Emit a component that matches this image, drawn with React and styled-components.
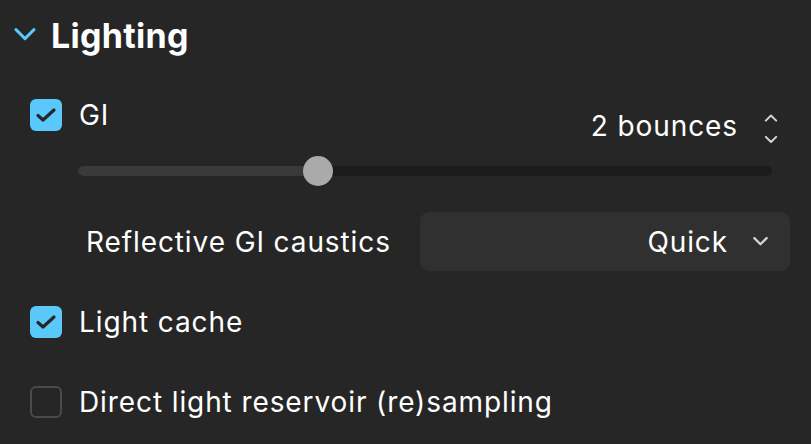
import { createGlobalStyle } from "styled-components";
import styled from "styled-components";

const GlobalStyle = createGlobalStyle`
  html, body {
    margin: 0;
    padding: 0;
    background: #262626;
  }
  body {
    font-family: Inter, "Noto Sans", sans-serif;
    color: #ffffff;
    -webkit-font-smoothing: antialiased;
  }
`;

const Chevron = ({ size = 22, color = "#5ac8fa", stroke = 3, up = false }) => (
  <svg
    width={size}
    height={size * 0.6}
    viewBox="0 0 22 13"
    fill="none"
    style={{ display: "block" }}
  >
    <path
      d={up ? "M2 11.5L11 2.5L20 11.5" : "M2 1.5L11 10.5L20 1.5"}
      stroke={color}
      strokeWidth={stroke}
      strokeLinecap="round"
      strokeLinejoin="round"
    />
  </svg>
);

const Checkbox = ({ checked }) => (
  <Box $checked={checked}>
    {checked && (
      <svg width="22" height="16" viewBox="0 0 22 16" fill="none">
        <path
          d="M3 8.5L8 13L19 3"
          stroke="#262626"
          strokeWidth="3.2"
          strokeLinecap="round"
          strokeLinejoin="round"
        />
      </svg>
    )}
  </Box>
);

const App = () => {
  const bounces = 2;
  const fill = 34.6; // percent of the track

  return (
    <>
      <GlobalStyle />
      <Panel>
        <Header>
          <Chevron />
          <Title>Lighting</Title>
        </Header>

        <GIBlock>
          <Checkbox checked />
          <GIContent>
            <TopRow>
              <Label>GI</Label>
              <ValueGroup>
                <Value>{bounces} bounces</Value>
                <Stepper>
                  <Chevron size={14} color="#d4d4d4" stroke={3.4} up />
                  <Chevron size={14} color="#d4d4d4" stroke={3.4} />
                </Stepper>
              </ValueGroup>
            </TopRow>
            <Slider>
              <Track />
              <TrackFill style={{ width: `${fill}%` }} />
              <Thumb style={{ left: `${fill}%` }} />
            </Slider>
          </GIContent>
        </GIBlock>

        <SelectRow>
          <Label>Reflective GI caustics</Label>
          <Select>
            <span>Quick</span>
            <Chevron size={15} color="#d4d4d4" stroke={3.4} />
          </Select>
        </SelectRow>

        <CheckRow $top={35}>
          <Checkbox checked />
          <Label>Light cache</Label>
        </CheckRow>

        <CheckRow $top={48}>
          <Checkbox />
          <Label>Direct light reservoir (re)sampling</Label>
        </CheckRow>
      </Panel>
    </>
  );
};

export default App;

const Panel = styled.div`
  width: 811px;
  height: 444px;
  box-sizing: border-box;
  padding: 18px 0 0 0;
  display: flex;
  flex-direction: column;
  overflow: hidden;
`;

const Header = styled.div`
  display: flex;
  align-items: center;
  gap: 15px;
  padding-left: 14px;
  height: 34px;
`;

const Title = styled.h2`
  margin: 0;
  font-size: 34px;
  font-weight: 700;
  line-height: 34px;
  letter-spacing: 0.3px;
  padding-top: 2px;
`;

const Box = styled.div`
  width: 32px;
  height: 32px;
  flex: none;
  box-sizing: border-box;
  border-radius: 6px;
  display: flex;
  align-items: center;
  justify-content: center;
  background: ${(p) => (p.$checked ? "#5ac8fa" : "transparent")};
  border: ${(p) => (p.$checked ? "none" : "2px solid #4a4a4a")};
`;

const Label = styled.span`
  font-size: 28px;
  line-height: 32px;
  letter-spacing: 0.9px;
  white-space: nowrap;
`;

const GIBlock = styled.div`
  display: flex;
  align-items: flex-start;
  gap: 17px;
  padding-left: 30px;
  margin-top: 47px;
`;

const GIContent = styled.div`
  flex: 1;
  display: flex;
  flex-direction: column;
  margin-right: 33px;
`;

const TopRow = styled.div`
  display: flex;
  justify-content: space-between;
  align-items: flex-start;
`;

const ValueGroup = styled.div`
  display: flex;
  align-items: center;
  gap: 26px;
  margin-top: 8px;
  height: 36px;
`;

const Value = styled.span`
  font-size: 28px;
  letter-spacing: 0.9px;
  line-height: 36px;
  padding-top: 2px;
`;

const Stepper = styled.div`
  display: flex;
  flex-direction: column;
  justify-content: space-between;
  height: 36px;
  padding: 7px 0 0;
  box-sizing: border-box;
  gap: 14px;
`;

const Slider = styled.div`
  position: relative;
  height: 30px;
  margin: 13px 6px 0 -1px;
`;

const Track = styled.div`
  position: absolute;
  left: 0;
  right: 0;
  top: 10px;
  height: 10px;
  border-radius: 5px;
  background: #1c1c1c;
`;

const TrackFill = styled.div`
  position: absolute;
  left: 0;
  top: 10px;
  height: 10px;
  border-radius: 5px 0 0 5px;
  background: #3a3a3a;
`;

const Thumb = styled.div`
  position: absolute;
  top: 0;
  width: 30px;
  height: 30px;
  margin-left: -15px;
  border-radius: 50%;
  background: #aaaaaa;
`;

const SelectRow = styled.div`
  display: flex;
  align-items: center;
  justify-content: space-between;
  padding: 0 21px 0 86px;
  margin-top: 26px;
`;

const Select = styled.div`
  width: 370px;
  height: 59px;
  box-sizing: border-box;
  border-radius: 9px;
  background: #303030;
  display: flex;
  align-items: center;
  justify-content: flex-end;
  gap: 25px;
  padding-right: 22px;
  font-size: 28px;
  letter-spacing: 0.9px;
`;

const CheckRow = styled.div`
  display: flex;
  align-items: center;
  gap: 17px;
  padding-left: 30px;
  margin-top: ${(p) => p.$top}px;
`;
